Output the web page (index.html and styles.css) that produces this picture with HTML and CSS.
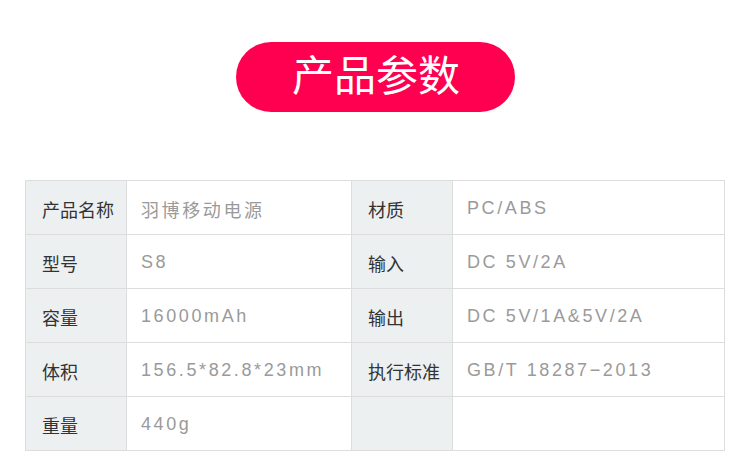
FILE: index.html
```html
<!DOCTYPE html>
<html lang="zh-CN">
<head>
<meta charset="utf-8">
<link rel="stylesheet" href="styles.css">
</head>
<body>
<div class="page">
  <div class="title-wrap">
    <div class="pill">产品参数</div>
  </div>
  <div class="specs">
    <div class="cell label">产品名称</div>
    <div class="cell value">羽博移动电源</div>
    <div class="cell label">材质</div>
    <div class="cell value">PC/ABS</div>

    <div class="cell label">型号</div>
    <div class="cell value">S8</div>
    <div class="cell label">输入</div>
    <div class="cell value">DC 5V/2A</div>

    <div class="cell label">容量</div>
    <div class="cell value">16000mAh</div>
    <div class="cell label">输出</div>
    <div class="cell value">DC 5V/1A&amp;5V/2A</div>

    <div class="cell label">体积</div>
    <div class="cell value">156.5*82.8*23mm</div>
    <div class="cell label">执行标准</div>
    <div class="cell value">GB/T 18287−2013</div>

    <div class="cell label">重量</div>
    <div class="cell value">440g</div>
    <div class="cell label"></div>
    <div class="cell value"></div>
  </div>
</div>
</body>
</html>
```

FILE: styles.css
```css
html, body {
  margin: 0;
  padding: 0;
  background: #ffffff;
}
.page {
  width: 750px;
  height: 474px;
  font-family: "Liberation Sans", "Noto Sans CJK SC", sans-serif;
}
.title-wrap {
  display: flex;
  justify-content: center;
  padding-top: 42px;
}
.pill {
  width: 279px;
  height: 70px;
  border-radius: 35px;
  background: #ff0050;
  color: #ffffff;
  font-size: 42px;
  line-height: 70px;
  text-align: center;
  padding-left: 2px;
  box-sizing: border-box;
}
.specs {
  margin: 68px 0 0 25px;
  width: 700px;
  box-sizing: border-box;
  display: grid;
  grid-template-columns: 101px 225px 101px 272px;
  grid-auto-rows: 54px;
  border-top: 1px solid #dddddd;
  border-left: 1px solid #dddddd;
}
.cell {
  border-right: 1px solid #dddddd;
  border-bottom: 1px solid #dddddd;
  display: flex;
  align-items: center;
  padding-top: 2px;
  box-sizing: border-box;
}
.label {
  background: #edf0f1;
  color: #333333;
  font-size: 18px;
  padding-left: 16px;
}
.value {
  background: #ffffff;
  color: #9a9a9a;
  font-size: 18px;
  letter-spacing: 2.6px;
  padding-left: 14px;
}
```
